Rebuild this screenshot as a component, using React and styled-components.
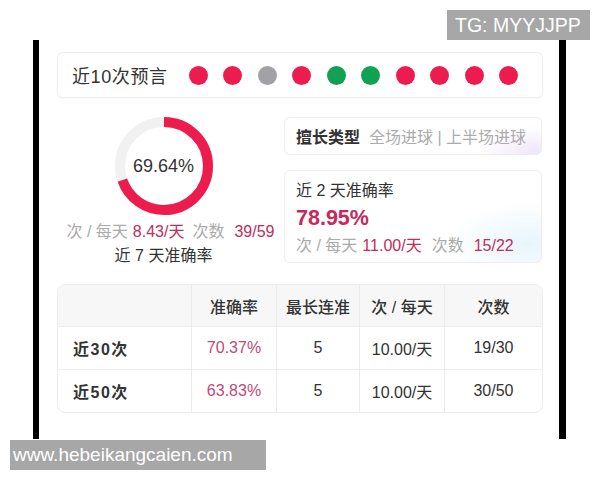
import React from 'react'
import styled, { createGlobalStyle } from 'styled-components'

const GlobalStyle = createGlobalStyle`
    body {
        margin: 0;
        background: #fff;
        font-family: "Liberation Sans", "Noto Sans CJK SC", sans-serif;
        color: #333;
    }
`

const RED = '#ec1c4f'
const VALUE = '#c02d5c'

const Page = styled.div`
    position: relative;
    width: 600px;
    height: 480px;
    overflow: hidden;
`

const Frame = styled.div`
    box-sizing: border-box;
    margin: 40px 0 0 33px;
    width: 533px;
    height: 399px;
    border-left: 6px solid #000;
    border-right: 7px solid #000;
    background: #fff;
    padding: 12px 16px 0 18px;
`

const PredictCard = styled.div`
    box-sizing: border-box;
    height: 46px;
    display: flex;
    align-items: center;
    padding-left: 14px;
    border: 1px solid #efefef;
    border-radius: 6px;
    box-shadow: 0 1px 3px rgba(0, 0, 0, 0.03);
`

const PredictLabel = styled.span`
    font-size: 18px;
    color: #333;
    letter-spacing: 0.6px;
`

const Dots = styled.div`
    display: flex;
    gap: 15.5px;
    margin-left: 21px;
`

const Dot = styled.span`
    width: 19px;
    height: 19px;
    border-radius: 50%;
    background: ${p => p.$c === 'r' ? RED : p.$c === 'g' ? '#12a152' : '#a2a2a6'};
`

const Middle = styled.div`
    display: grid;
    grid-template-columns: 227px 258px;
    align-items: start;
    margin-top: 19px;
`

const DonutCol = styled.div`
    display: flex;
    flex-direction: column;
    align-items: center;
    padding-right: 14px;
`

const Donut = styled.div`
    position: relative;
    width: 98px;
    height: 98px;
`

const DonutText = styled.div`
    position: absolute;
    inset: 0;
    display: flex;
    align-items: center;
    justify-content: center;
    font-size: 18px;
    color: #333;
`

const StatLine = styled.div`
    display: flex;
    align-items: baseline;
    white-space: nowrap;
    font-size: 16px;
    line-height: 22px;
    margin-top: ${p => p.$top || 0}px;
    margin-left: ${p => p.$left || 0}px;
`

const Muted = styled.span`
    color: #aaa;
    margin-right: ${p => p.$gap || 6}px;
`

const Val = styled.span`
    color: ${VALUE};
    margin-right: ${p => p.$gap || 0}px;
`

const Caption = styled.div`
    font-size: 16px;
    line-height: 22px;
    color: #333;
    margin-top: 2px;
`

const RightCol = styled.div`
    display: flex;
    flex-direction: column;
    gap: 15px;
`

const TypeCard = styled.div`
    box-sizing: border-box;
    height: 38px;
    display: flex;
    align-items: center;
    padding-left: 11px;
    border: 1px solid #eee;
    border-radius: 6px;
    font-size: 16px;
    white-space: nowrap;
    background: radial-gradient(ellipse 90px 40px at 100% 100%, rgba(225, 205, 240, 0.55), rgba(255, 255, 255, 0) 70%), #fff;
`

const TypeTitle = styled.span`
    font-weight: 700;
    color: #333;
    margin-right: 9px;
`

const TypeText = styled.span`
    color: #ababab;
`

const RateCard = styled.div`
    box-sizing: border-box;
    height: 93px;
    padding: 9px 11px 0;
    border: 1px solid #eee;
    border-radius: 6px;
    background: radial-gradient(ellipse 110px 60px at 95% 80%, rgba(215, 238, 248, 0.6), rgba(255, 255, 255, 0) 70%), #fff;
`

const RateTitle = styled.div`
    font-size: 16px;
    color: #333;
    line-height: 22px;
`

const RateBig = styled.div`
    font-size: 21.5px;
    font-weight: 700;
    color: #c8285b;
    line-height: 30px;
    margin-top: 1px;
`

const Table = styled.table`
    width: 486px;
    margin-top: 17px;
    border-collapse: separate;
    border-spacing: 0;
    border: 1px solid #ececec;
    border-radius: 8px;
    overflow: hidden;
    table-layout: fixed;
    font-size: 16px;
`

const Th = styled.th`
    height: 41px;
    padding: 0;
    background: #f7f7f7;
    font-weight: 500;
    color: #333;
    text-align: center;
    border-left: ${p => p.$first ? 'none' : '1px solid #ececec'};
`

const Td = styled.td`
    height: 42px;
    padding: 0;
    text-align: ${p => p.$first ? 'left' : 'center'};
    padding-left: ${p => p.$first ? 15 : 0}px;
    font-weight: ${p => p.$first ? 700 : 400};
    letter-spacing: ${p => p.$first ? 1.5 : 0}px;
    color: ${p => p.$hi ? '#c04a78' : '#333'};
    border-top: 1px solid #ececec;
    border-left: ${p => p.$first ? 'none' : '1px solid #ececec'};
`

const Mark = styled.div`
    position: absolute;
    box-sizing: border-box;
    height: 30px;
    display: flex;
    align-items: center;
    background: #a7a7a7;
    color: #fff;
    font-family: "Liberation Sans", sans-serif;
    white-space: nowrap;
`

const TopMark = styled(Mark)`
    left: 447px;
    top: 10px;
    width: 143px;
    padding-left: 8px;
    font-size: 19.5px;
`

const BottomMark = styled(Mark)`
    left: 10px;
    top: 440px;
    width: 256px;
    padding-left: 3px;
    font-size: 19px;
`

const dots = ['r', 'r', 'x', 'r', 'g', 'g', 'r', 'r', 'r', 'r']

const rows = [
    ['近30次', '70.37%', '5', '10.00/天', '19/30'],
    ['近50次', '63.83%', '5', '10.00/天', '30/50'],
]

function Ring({ value }) {
    const r = 44
    const c = 2 * Math.PI * r
    return (
        <svg width="98" height="98" viewBox="0 0 98 98">
            <circle cx="49" cy="49" r={r} fill="none" stroke="#f1f1f1" strokeWidth="10" />
            <circle
                cx="49" cy="49" r={r} fill="none" stroke={RED} strokeWidth="10"
                strokeDasharray={`${c * value / 100} ${c}`}
                transform="rotate(-90 49 49)"
            />
        </svg>
    )
}

export default function App() {
    return (
        <Page>
            <GlobalStyle />
            <Frame>
                <PredictCard>
                    <PredictLabel>近10次预言</PredictLabel>
                    <Dots>
                        {dots.map((d, i) => <Dot key={i} $c={d} />)}
                    </Dots>
                </PredictCard>

                <Middle>
                    <DonutCol>
                        <Donut>
                            <Ring value={69.64} />
                            <DonutText>69.64%</DonutText>
                        </Donut>
                        <StatLine $top={6} $left={14}>
                            <Muted $gap={5}>次 / 每天</Muted>
                            <Val $gap={8}>8.43/天</Val>
                            <Muted $gap={10}>次数</Muted>
                            <Val>39/59</Val>
                        </StatLine>
                        <Caption>近 7 天准确率</Caption>
                    </DonutCol>

                    <RightCol>
                        <TypeCard>
                            <TypeTitle>擅长类型</TypeTitle>
                            <TypeText>全场进球 | 上半场进球</TypeText>
                        </TypeCard>
                        <RateCard>
                            <RateTitle>近 2 天准确率</RateTitle>
                            <RateBig>78.95%</RateBig>
                            <StatLine $top={2}>
                                <Muted $gap={5}>次 / 每天</Muted>
                                <Val $gap={10}>11.00/天</Val>
                                <Muted $gap={10}>次数</Muted>
                                <Val>15/22</Val>
                            </StatLine>
                        </RateCard>
                    </RightCol>
                </Middle>

                <Table>
                    <colgroup>
                        <col style={{ width: 133 }} />
                        <col style={{ width: 85 }} />
                        <col style={{ width: 83 }} />
                        <col style={{ width: 85 }} />
                        <col />
                    </colgroup>
                    <thead>
                        <tr>
                            <Th $first />
                            <Th>准确率</Th>
                            <Th>最长连准</Th>
                            <Th>次 / 每天</Th>
                            <Th>次数</Th>
                        </tr>
                    </thead>
                    <tbody>
                        {rows.map(r => (
                            <tr key={r[0]}>
                                <Td $first>{r[0]}</Td>
                                <Td $hi>{r[1]}</Td>
                                <Td>{r[2]}</Td>
                                <Td>{r[3]}</Td>
                                <Td>{r[4]}</Td>
                            </tr>
                        ))}
                    </tbody>
                </Table>
            </Frame>
            <TopMark>TG: MYYJJPP</TopMark>
            <BottomMark>www.hebeikangcaien.com</BottomMark>
        </Page>
    )
}
